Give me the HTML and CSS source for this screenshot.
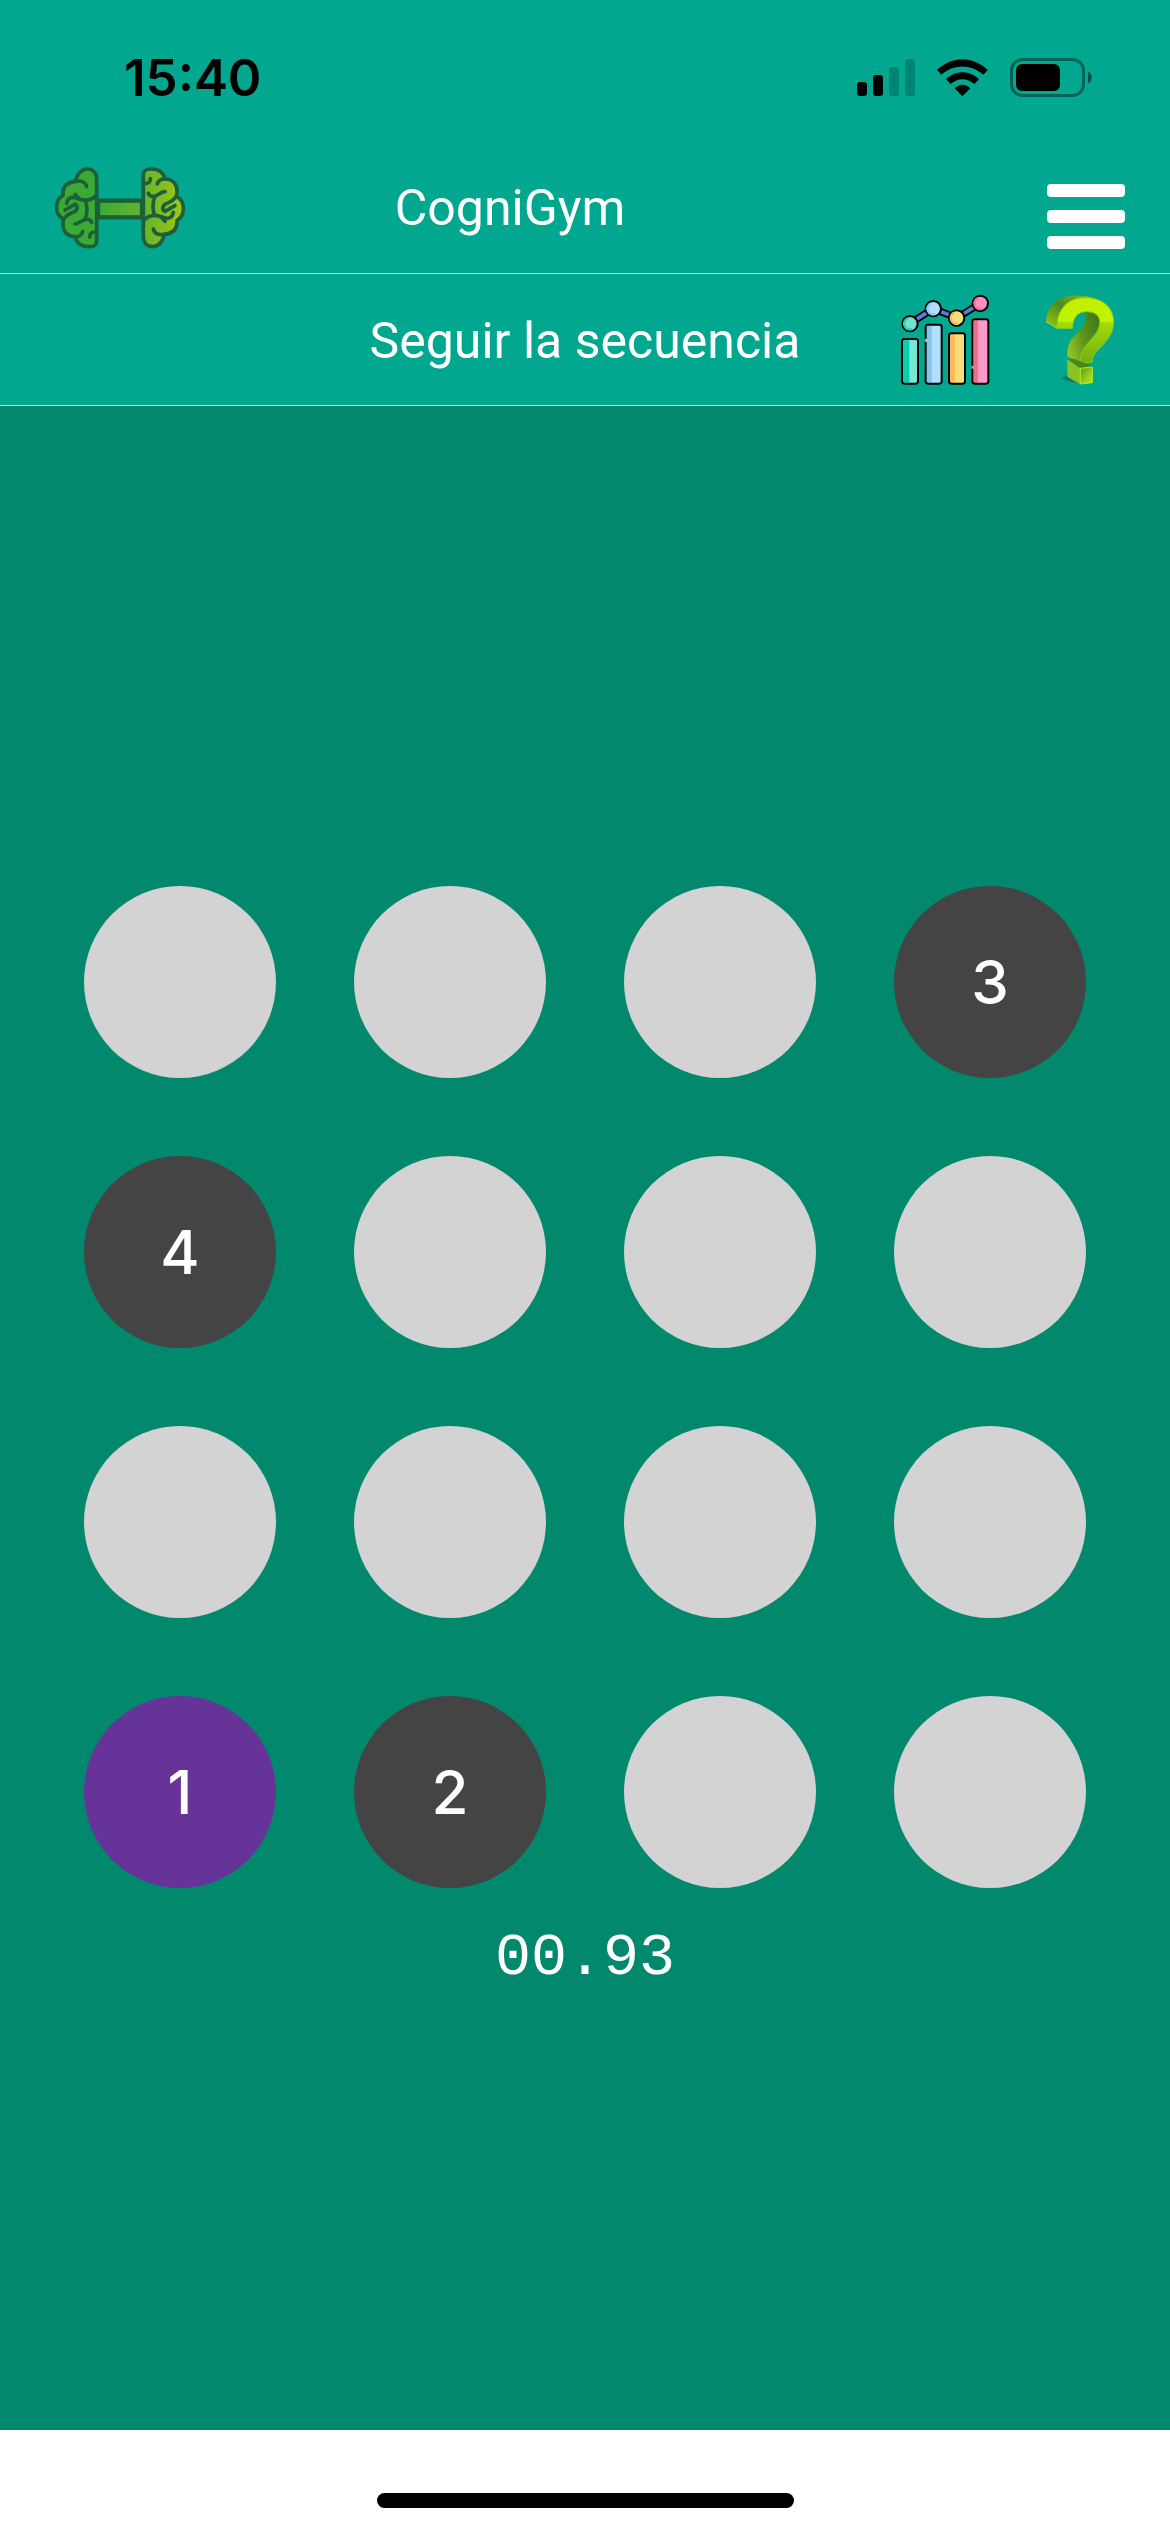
FILE: index.html
```html
<!DOCTYPE html>
<html lang="es">
<head>
  <meta charset="UTF-8">
  <meta name="viewport" content="width=device-width, initial-scale=1">
  <title>CogniGym</title>
  <link rel="stylesheet" href="styles.css">
</head>
<body>

<div class="status-bar">
  <span class="clock">15:40</span>
  <div class="status-icons">
    <svg width="58" height="38" viewBox="0 0 58 38">
      <rect x="0" y="23" width="10" height="14" rx="3"/>
      <rect x="16" y="16" width="10" height="21" rx="3"/>
      <rect x="32" y="8" width="10" height="29" rx="3" opacity=".2"/>
      <rect x="48" y="0" width="10" height="37" rx="3" opacity=".2"/>
    </svg>
    <svg width="51" height="38" viewBox="318 56 153 114">
      <path d="M318 89C362 46 426 46 470 89L457 103C420 70 368 70 331 103Z"/>
      <path d="M345 117C373 89 416 89 444 117L430 131C409 112 380 112 359 131Z"/>
      <path d="M371 144C385 130 404 130 418 144L394 168Z"/>
    </svg>
    <svg width="82" height="40" viewBox="0 0 82 40">
      <rect x="1.5" y="1.5" width="72" height="36" rx="11" fill="none" stroke="#000" stroke-width="3" opacity=".4"/>
      <rect x="6" y="6" width="44" height="27" rx="6"/>
      <path d="M78 13.500C83 16 83 23 78 25.500Z" opacity=".5"/>
    </svg>
  </div>
</div>

<header class="navbar">
  <a class="logo" href="#" aria-label="CogniGym">
    <svg width="130" height="83" viewBox="45 45 390 249">
      <defs>
        <linearGradient id="limeSide" gradientUnits="userSpaceOnUse" x1="309" y1="0" x2="430" y2="0">
          <stop offset="0" stop-color="#65b32e"/>
          <stop offset="1" stop-color="#a2c616"/>
        </linearGradient>
        <linearGradient id="barFill" gradientUnits="userSpaceOnUse" x1="175" y1="0" x2="305" y2="0">
          <stop offset="0" stop-color="#3aaa35"/>
          <stop offset="1" stop-color="#65b32e"/>
        </linearGradient>
        <path id="half" d="M310 72C310 58 318 54 334 54C354 54 370 64 375 84C398 84 412 100 411 122C411 129 411 133 409 137C423 143 430 156 430 172C430 188 424 201 411 208C413 232 400 247 374 250C368 270 357 287 338 287C320 287 310 275 310 255Z"/>
        <g id="folds">
          <path d="M314 98C325 98 332 92 331 83"/>
          <path d="M375 84C365 83 355 88 352 99"/>
          <path d="M325 127C328 136 338 138 345 135C356 134 360 123 375 122"/>
          <path d="M345 136C338 151 336 177 345 194"/>
          <path d="M409 137C396 154 389 153 376 159C366 166 366 177 375 181"/>
          <path d="M375 181C388 174 397 168 405 164"/>
          <path d="M312 207C327 191 353 190 364 199L375 211"/>
          <path d="M400 184C397 201 382 207 365 197"/>
          <path d="M340 234C343 248 357 253 374 250"/>
        </g>
      </defs>
      <rect x="174" y="149" width="132" height="50" fill="url(#barFill)" stroke="#1d5f38" stroke-width="13"/>
      <g stroke="#1d5f38" stroke-width="11" stroke-linecap="round" stroke-linejoin="round">
        <use href="#half" fill="url(#limeSide)"/>
        <use href="#folds" fill="none"/>
        <g transform="rotate(180 240 170.500)">
          <use href="#half" fill="#3aaa35"/>
          <use href="#folds" fill="none"/>
        </g>
      </g>
    </svg>
  </a>
  <h1 class="title">CogniGym</h1>
  <button class="icon-btn menu-btn" type="button" aria-label="Menu">
    <span></span>
    <span></span>
    <span></span>
  </button>
</header>

<div class="navbar subnav">
  <h2 class="title">Seguir la secuencia</h2>
  <div class="tools">
    <button class="icon-btn" type="button" aria-label="Estadisticas">
      <svg width="89" height="92" viewBox="63 39 267 276">
        <path d="M90 127L160 83L230 111L301 67" fill="none" stroke="#000" stroke-width="22"/>
        <path d="M90 127L160 83L230 111L301 67" fill="none" stroke="#5d7bd5" stroke-width="11"/>
        <g stroke="#000" stroke-width="6">
          <circle cx="90" cy="128" r="23" fill="#71e2ce"/>
          <circle cx="160" cy="83" r="23" fill="#b0defb"/>
          <circle cx="230" cy="111" r="23" fill="#f6df78"/>
          <circle cx="301" cy="67" r="23" fill="#ff91c0"/>
        </g>
        <g fill="none" stroke-width="7">
          <path d="M83 112A17 17 0 0 0 96 144" stroke="#29d0b0"/>
          <path d="M153 67A17 17 0 0 0 166 99" stroke="#8fc8f0"/>
          <path d="M223 95A17 17 0 0 0 236 127" stroke="#fdb95b"/>
          <path d="M294 51A17 17 0 0 0 307 83" stroke="#f8719b"/>
        </g>
        <rect x="66" y="174" width="48" height="134" rx="7" fill="#78e8d6"/>
        <rect x="137" y="131" width="48" height="177" rx="7" fill="#b0defb"/>
        <rect x="207" y="157" width="48" height="151" rx="7" fill="#f6df78"/>
        <rect x="277" y="115" width="48" height="193" rx="7" fill="#ff99c9"/>
        <path d="M69 177h19v128h-19z" fill="#08d0ac"/>
        <path d="M140 134h15v171h-15z" fill="#84c3eb"/>
        <path d="M210 160h14v145h-14z" fill="#ffb55a"/>
        <path d="M280 118h14v187h-14z" fill="#ee6f8d"/>
        <g fill="none" stroke="#000" stroke-width="6">
          <rect x="66" y="174" width="48" height="134" rx="7"/>
          <path d="M137 173V138Q137 131 144 131H178Q185 131 185 138V301Q185 308 178 308H144Q137 308 137 301V183"/>
          <rect x="207" y="157" width="48" height="151" rx="7"/>
          <path d="M277 254V122Q277 115 284 115H318Q325 115 325 122V301Q325 308 318 308H284Q277 308 277 301V263"/>
        </g>
      </svg>
    </button>
    <button class="icon-btn" type="button" aria-label="Ayuda">
      <svg width="70" height="92" viewBox="75 39 210 276">
        <defs>
          <linearGradient id="face" x1="0" y1="0" x2="0" y2="1">
            <stop offset="0" stop-color="#c6ee00"/>
            <stop offset=".37" stop-color="#bdf400"/>
            <stop offset=".37" stop-color="#a5dc06"/>
            <stop offset="1" stop-color="#6fae17"/>
          </linearGradient>
          <linearGradient id="back" x1="0" y1="1" x2="1" y2="0">
            <stop offset="0" stop-color="#9bcc1c"/>
            <stop offset=".5" stop-color="#4d8b19"/>
            <stop offset="1" stop-color="#8cbb20"/>
          </linearGradient>
          <linearGradient id="stem" x1="0" y1=".7" x2="1" y2=".3">
            <stop offset="0" stop-color="#92c629"/>
            <stop offset=".5" stop-color="#5c941b"/>
            <stop offset="1" stop-color="#3f7914"/>
          </linearGradient>
          <linearGradient id="dot" x1="0" y1="0" x2="1" y2="1">
            <stop offset="0" stop-color="#5d9b15"/>
            <stop offset="1" stop-color="#c0ed25"/>
          </linearGradient>
        </defs>
        <path d="M124 292L146 278L178 308Q148 305 124 292Z" fill="#087e69"/>
        <path d="M78 122C80 72 116 43 168 44C190 43 205 46 215 50L160 62C124 78 110 105 110 141Z" fill="url(#back)"/>
        <path d="M181 248L142 226C141 190 151 175 170 158C192 139 200 120 195 92C225 88 245 105 239 133L190 215Z" fill="url(#stem)"/>
        <path d="M110 141C110 82 147 49 195 50C247 49 281 80 281 122C281 160 257 183 236 205C222 220 217 228 217 243L181 248C180 224 185 208 202 188C223 164 239 151 239 124C239 104 225 92 200 92C173 92 158 110 158 141Z" fill="url(#face)" stroke="#8bc814" stroke-width="3"/>
        <path d="M78 122L110 141H158" fill="none" stroke="#a8d923" stroke-width="3"/>
        <path d="M142 235L161 233L218 256L180 262Z" fill="#48851a"/>
        <path d="M142 235L180 262V310L142 287Z" fill="#8bc322"/>
        <path d="M181 262L217 258V305L181 309Z" fill="url(#dot)" stroke="#b5ee16" stroke-width="3"/>
      </svg>
    </button>
  </div>
</div>

<main class="game">
  <div class="board">
    <button class="cell" type="button" aria-label="Casilla"></button>
    <button class="cell" type="button" aria-label="Casilla"></button>
    <button class="cell" type="button" aria-label="Casilla"></button>
    <button class="cell marked" type="button">3</button>

    <button class="cell marked" type="button">4</button>
    <button class="cell" type="button" aria-label="Casilla"></button>
    <button class="cell" type="button" aria-label="Casilla"></button>
    <button class="cell" type="button" aria-label="Casilla"></button>

    <button class="cell" type="button" aria-label="Casilla"></button>
    <button class="cell" type="button" aria-label="Casilla"></button>
    <button class="cell" type="button" aria-label="Casilla"></button>
    <button class="cell" type="button" aria-label="Casilla"></button>

    <button class="cell marked active" type="button">1</button>
    <button class="cell marked" type="button">2</button>
    <button class="cell" type="button" aria-label="Casilla"></button>
    <button class="cell" type="button" aria-label="Casilla"></button>
  </div>
  <div class="timer">00.93</div>
</main>

<footer class="home-area">
  <div class="home-bar"></div>
</footer>

</body>
</html>
```
FILE: styles.css
```css
* {
  box-sizing: border-box;
}

body {
  display: flex;
  flex-direction: column;
  min-height: 100vh;
  margin: 0;
  background-color: #fff;
  color: #fff;
  font-family: Roboto, sans-serif;
}

svg {
  display: block;
}

/* status bar */
.status-bar {
  display: flex;
  justify-content: space-between;
  align-items: center;
  height: 141px;
  padding: 14px 78px 0 124px;
  background-color: #02a78f;
  color: #000;
}

.clock {
  font-family: Inter, sans-serif;
  font-size: 51px;
  font-weight: 600;
}

.status-icons {
  display: flex;
  align-items: center;
  gap: 22px;
}

/* headers */
.navbar {
  display: grid;
  grid-template-columns: 210px 1fr 360px;
  align-items: center;
  height: 133px;
  background-color: #02a78f;
  border-bottom: 1px solid #a6ddd4;
}

.subnav {
  grid-template-columns: 300px 1fr 300px;
  height: 132px;
}

.logo {
  padding-left: 55px;
}

.title {
  margin: 0;
  padding-top: 2px;
  font-size: 50px;
  font-weight: 400;
  text-align: center;
  white-space: nowrap;
}

.subnav .title {
  grid-column: 2;
}

.icon-btn {
  padding: 0;
  border: none;
  background: none;
  cursor: pointer;
}

.menu-btn {
  display: flex;
  flex-direction: column;
  gap: 13px;
  width: 78px;
  margin: 18px 45px 0 0;
  justify-self: end;
}

.menu-btn span {
  width: 100%;
  height: 13px;
  border-radius: 4px;
  background-color: #fff;
}

.tools {
  display: flex;
  justify-content: flex-end;
  gap: 55px;
  padding-right: 55px;
}

/* game */
.game {
  display: flex;
  flex: 1;
  flex-direction: column;
  justify-content: center;
  padding: 42px 84px 0;
  background-color: #02886c;
}

.board {
  display: grid;
  grid-template-columns: repeat(4, 1fr);
  gap: 78px;
}

.cell {
  aspect-ratio: 1;
  padding: 0;
  border: none;
  border-radius: 50%;
  background-color: #d3d3d3;
  color: #fff;
  font-family: Inter, sans-serif;
  font-size: 60px;
  font-weight: 500;
  cursor: pointer;
}

.marked {
  background-color: #444;
}

.active {
  background-color: #639;
}

.timer {
  margin-top: 36px;
  font-family: "Liberation Mono", monospace;
  font-size: 60px;
  line-height: 68px;
  text-align: center;
}

/* home indicator */
.home-area {
  display: flex;
  justify-content: center;
  align-items: flex-end;
  height: 102px;
  padding-bottom: 24px;
}

.home-bar {
  width: 417px;
  height: 15px;
  border-radius: 8px;
  background-color: #000;
}
```
